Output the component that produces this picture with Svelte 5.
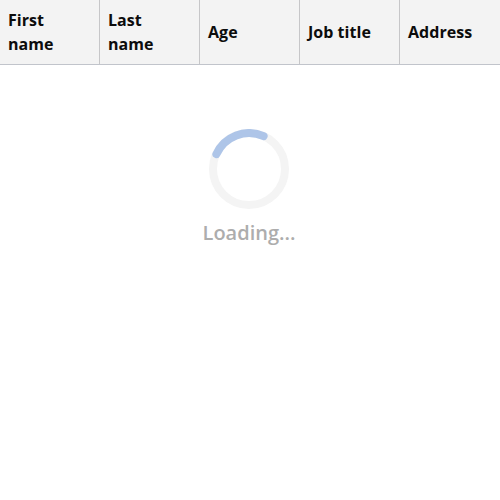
<script>
  const columns = ['First name', 'Last name', 'Age', 'Job title', 'Address'];
</script>

<div class="table">
  <div class="header">
    {#each columns as column}
      <div class="cell">{column}</div>
    {/each}
  </div>
  <div class="loading">
    <svg class="spinner" width="80" height="80" viewBox="0 0 80 80" fill="none">
      <circle cx="40" cy="40" r="36" stroke="#f4f4f4" stroke-width="8" />
      <path d="M7.4 25.2 A35.8 35.8 0 0 1 54.6 7.2" stroke="#aec5e8" stroke-width="8" stroke-linecap="round" />
    </svg>
    <div class="label">Loading...</div>
  </div>
</div>

<style>
  :global(body) {
    background: #fff;
  }
  .table {
    width: 500px;
    height: 500px;
    overflow: hidden;
    font-family: 'Open Sans', sans-serif;
  }
  .header {
    display: flex;
    height: 65px;
    box-sizing: border-box;
    background: #f3f3f3;
    border-bottom: 1px solid #c1c4cb;
  }
  .cell {
    width: 100px;
    box-sizing: border-box;
    padding: 0 8px;
    display: flex;
    align-items: center;
    border-right: 1px solid #c6c6c8;
    font-size: 16px;
    line-height: 24px;
    font-weight: 700;
    letter-spacing: 0.03px;
    color: #0c0c0c;
  }
  .cell:last-child {
    border-right: 0;
  }
  .loading {
    display: flex;
    flex-direction: column;
    align-items: center;
    padding: 64px 2px 0 0;
  }
  .spinner {
    display: block;
  }
  .label {
    margin-top: 8px;
    font-size: 20px;
    line-height: 32px;
    font-weight: 600;
    color: #adadad;
  }
</style>
